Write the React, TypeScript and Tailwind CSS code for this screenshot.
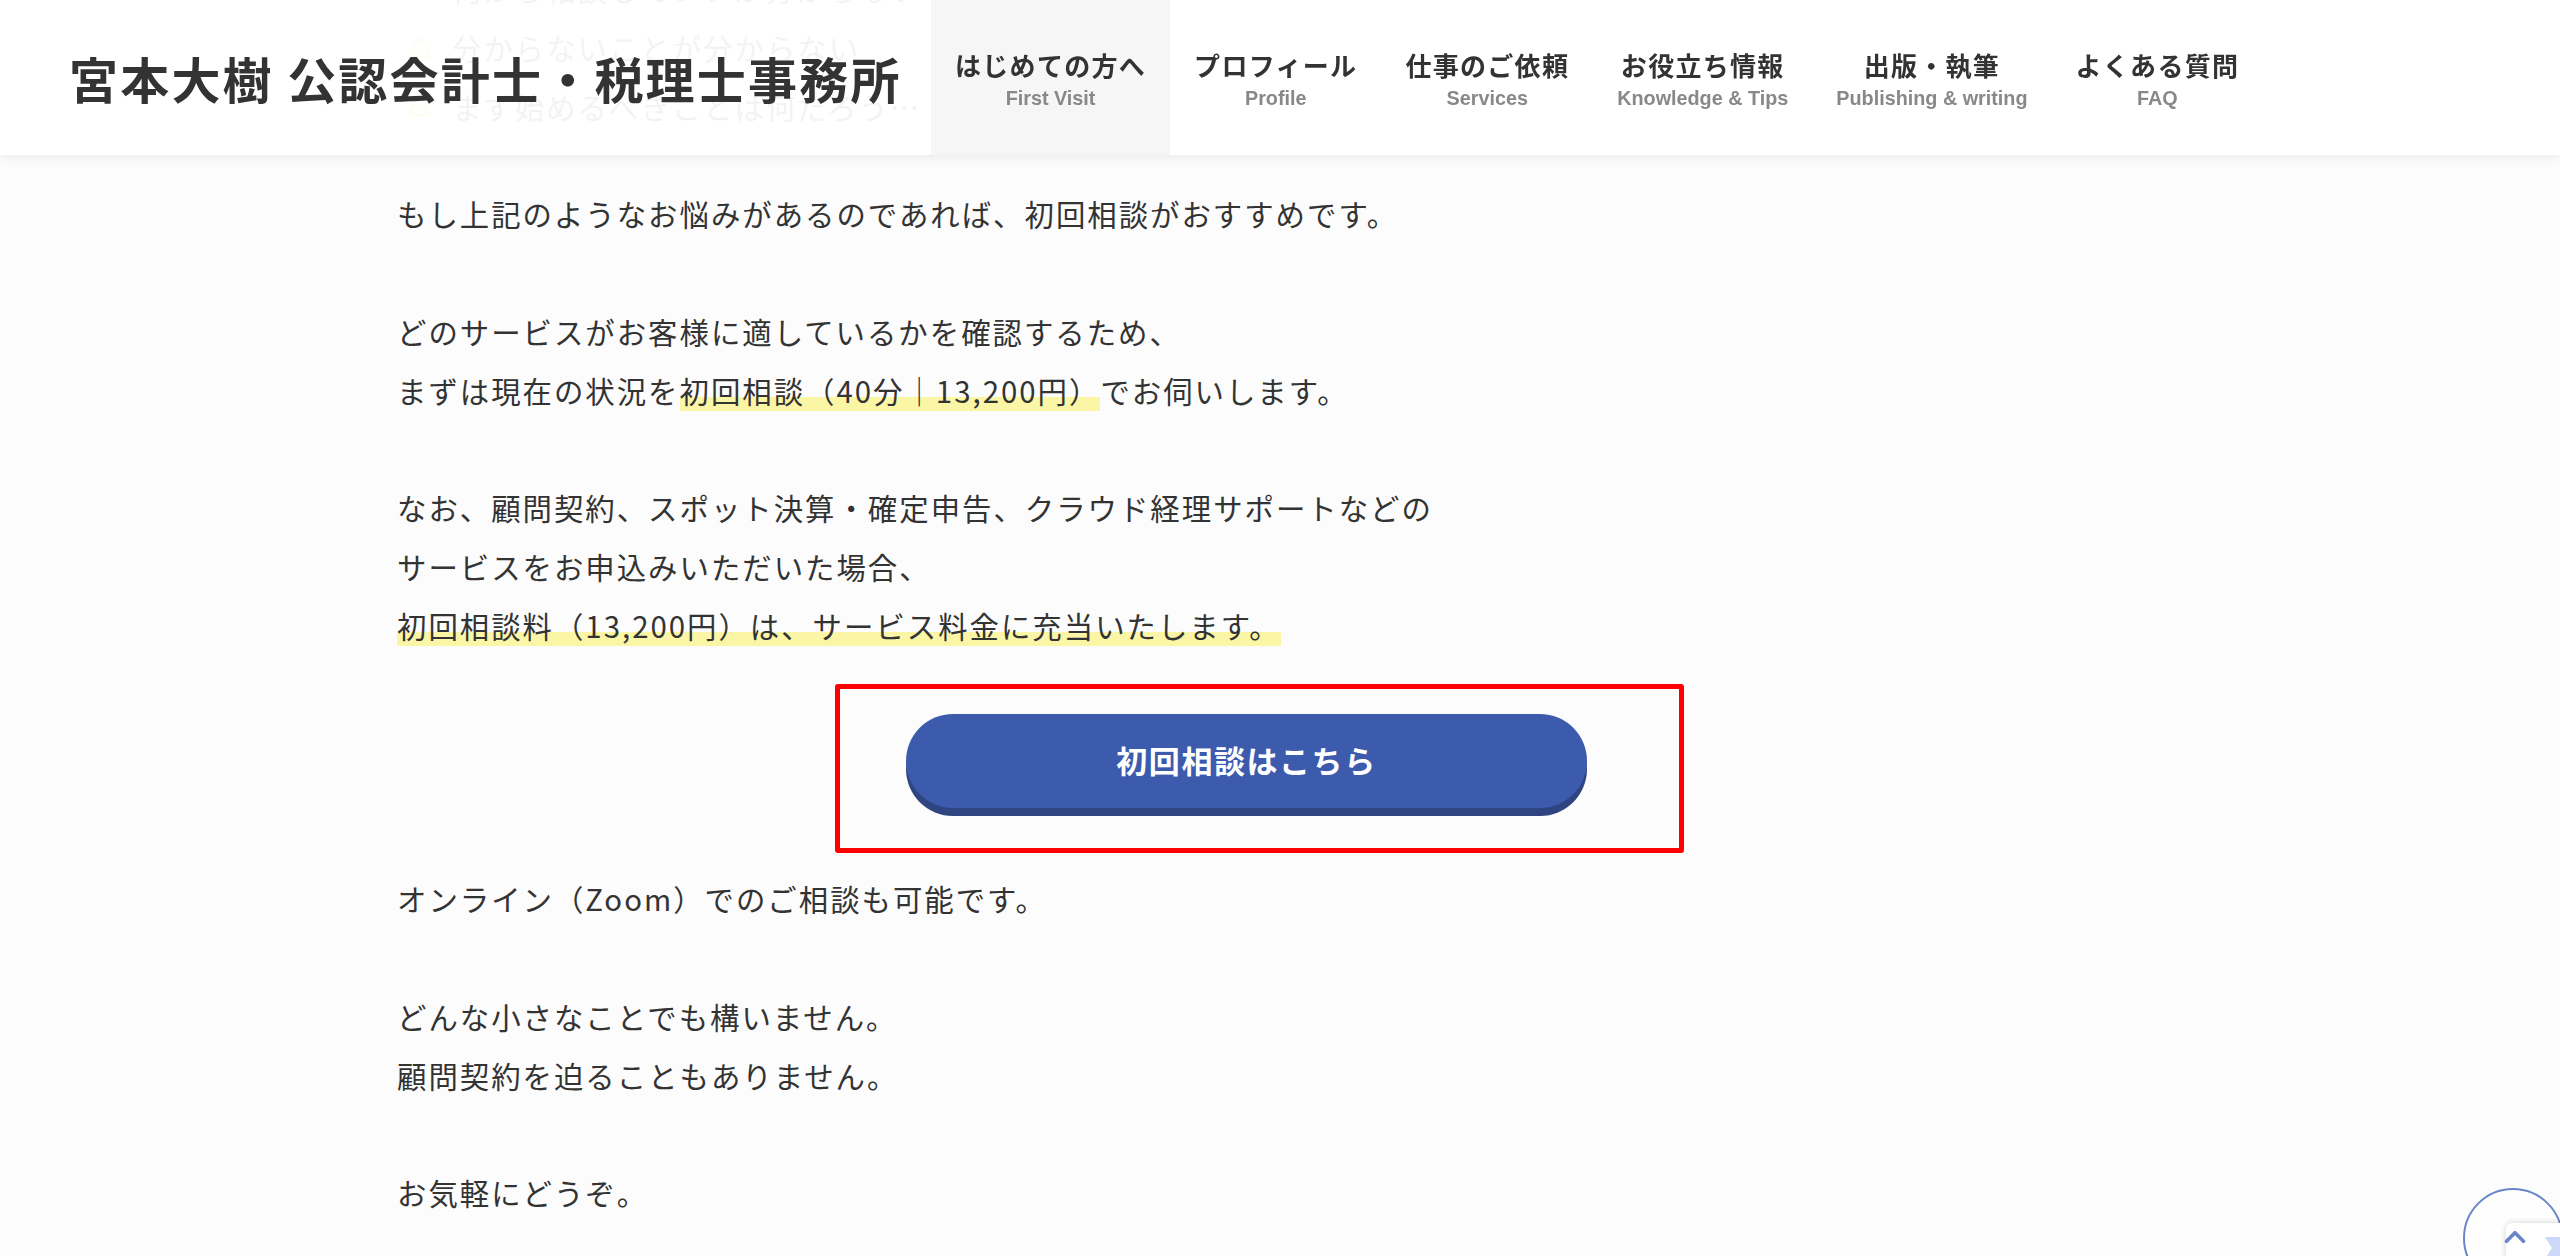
import { ChevronUp } from 'lucide-react'

const NAV = [
  { label: 'はじめての方へ', sub: 'First Visit', active: true },
  { label: 'プロフィール', sub: 'Profile' },
  { label: '仕事のご依頼', sub: 'Services' },
  { label: 'お役立ち情報', sub: 'Knowledge & Tips' },
  { label: '出版・執筆', sub: 'Publishing & writing' },
  { label: 'よくある質問', sub: 'FAQ' },
]

const WORRIES = [
  '何から相談していいか分からない',
  '分からないことが分からない',
  'まず始めるべきことは何だろう…',
]

function Warn() {
  return (
    <svg viewBox="0 0 28 24" className="h-[22px] w-[28px]" fill="none">
      <path d="M14 2 L26 22 H2 Z" stroke="#f2c318" strokeWidth="2.5" strokeLinejoin="round" />
    </svg>
  )
}

function Mark({ children }: { children: React.ReactNode }) {
  return (
    <span className="bg-[linear-gradient(transparent_66%,#fbf5a6_66%)]">{children}</span>
  )
}

function Header() {
  return (
    <header className="fixed inset-x-0 top-0 z-20 flex h-[155px] bg-white/94 shadow-[0_2px_10px_rgba(0,0,0,0.08)]">
      <div className="flex w-[931px] shrink-0 items-center pl-[69px]">
        <h1 className="whitespace-nowrap text-[49px] font-bold leading-none tracking-[0.045em] text-[#333]">
          宮本大樹 公認会計士・税理士事務所
        </h1>
      </div>
      <nav className="flex h-full">
        {NAV.map((item) => (
          <a
            key={item.label}
            href="#"
            className={
              'flex flex-col items-center justify-center px-[24px] pt-[2px] ' +
              (item.active ? 'bg-[#f6f6f6]' : '')
            }
          >
            <span className="whitespace-nowrap text-[26px] font-bold leading-[39px] tracking-[0.05em] text-[#333]">
              {item.label}
            </span>
            <span className="whitespace-nowrap font-['Liberation_Sans',sans-serif] text-[19.8px] font-bold leading-[29px] text-[#888]">
              {item.sub}
            </span>
          </a>
        ))}
      </nav>
    </header>
  )
}

function ToTop() {
  return (
    <>
      <div className="fixed bottom-[-32px] right-[-3px] z-20 h-[100px] w-[100px] rounded-full border-2 border-[#6a86c8] bg-white/60"></div>
      <div className="fixed bottom-[-20px] right-[-20px] z-20 h-[53px] w-[74px] rounded-[6px] bg-white shadow-[0_0_6px_rgba(0,0,0,0.18)]">
        <svg viewBox="0 0 16 22" className="absolute left-[39px] top-[14px] h-[22px] w-[16px]">
          <path d="M0 0 H16 V22 H0 L7 11 Z" fill="#cbd8f7" />
        </svg>
      </div>
      <ChevronUp
        className="fixed bottom-[2px] right-[28px] z-30 h-[34px] w-[34px] text-[#6a86c8]"
        strokeWidth={2.6}
      />
    </>
  )
}

export default function App() {
  return (
    <div className="relative h-screen overflow-hidden bg-[#fcfcfc] font-['Noto_Sans_CJK_JP',sans-serif] text-[#333]">
      <Header />

      <main className="-mt-[41px] w-[2096px] pl-[397px] text-[29.4px] leading-[58.8px] tracking-[0.068em]">
        <ul className="mb-[49px]">
          {WORRIES.map((w) => (
            <li key={w} className="flex items-center pl-[8px]">
              <Warn />
              <span className="ml-[19px]">{w}</span>
            </li>
          ))}
        </ul>

        <p className="mb-[58.8px]">もし上記のようなお悩みがあるのであれば、初回相談がおすすめです。</p>

        <p className="mb-[58.8px]">
          どのサービスがお客様に適しているかを確認するため、
          <br />
          まずは現在の状況を<Mark>初回相談（40分｜13,200円）</Mark>でお伺いします。
        </p>

        <p>
          なお、顧問契約、スポット決算・確定申告、クラウド経理サポートなどの
          <br />
          サービスをお申込みいただいた場合、
          <br />
          <Mark>初回相談料（13,200円）は、サービス料金に充当いたします。</Mark>
        </p>

        <div className="mb-[16.6px] ml-[438px] mt-[29px] h-[169px] w-[849px] rounded-[3px] border-[5px] border-[#ff0000] pl-[66px] pt-[25px]">
          <a
            href="#"
            className="flex h-[94px] w-[681px] items-center justify-center rounded-full bg-[#3c5bac] text-[31px] font-bold tracking-[0.05em] text-white shadow-[0_8px_0_#2e4582]"
          >
            初回相談はこちら
          </a>
        </div>

        <p className="mb-[58.8px]">オンライン（Zoom）でのご相談も可能です。</p>

        <p className="mb-[58.8px]">
          どんな小さなことでも構いません。
          <br />
          顧問契約を迫ることもありません。
        </p>

        <p>お気軽にどうぞ。</p>
      </main>

      <ToTop />
    </div>
  )
}
